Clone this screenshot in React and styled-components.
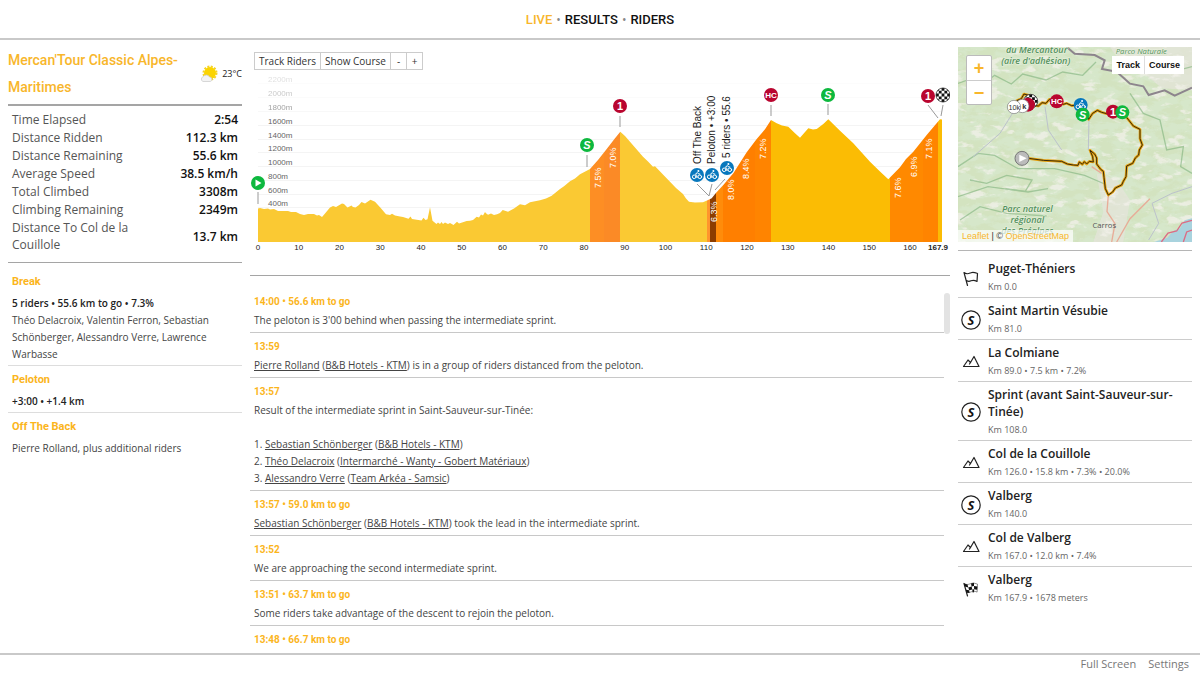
import React, { useState } from "react"
import styled, { createGlobalStyle } from "styled-components"

const GlobalStyle = createGlobalStyle`
    * {
        box-sizing: border-box;
    }
    body {
        margin: 0;
        background: #fff;
        color: #444;
        font: 11px/17px "Open Sans", sans-serif;
    }
    a {
        color: inherit;
    }
    button {
        font: inherit;
        cursor: pointer;
    }
`

const display = `"Roboto", sans-serif`

const Page = styled.div`
    display: flex;
    flex-direction: column;
    height: 100vh;
`
const Nav = styled.nav`
    display: flex;
    justify-content: center;
    align-items: center;
    gap: 4px;
    height: 40px;
    flex: none;
    border-bottom: 2px solid #c9c9c9;
    color: #888;
    font-size: 12px;
`
const NavLink = styled.a`
    font-family: ${display};
    font-size: 13px;
    font-weight: 500;
    text-decoration: none;
    text-transform: uppercase;
    color: ${props => props.$active ? "#f8b62b" : "#111"};
`
const Columns = styled.main`
    display: grid;
    grid-template-columns: 250px minmax(0, 1fr) 250px;
    flex: 1;
    min-height: 0;
`
const Side = styled.aside`
    padding: 7px 8px 0;
    overflow: hidden;
`
const TitleRow = styled.header`
    display: flex;
    justify-content: space-between;
    align-items: center;
    height: 59px;
    padding-bottom: 4px;
    border-bottom: 2px solid #a5a5a5;
`
const Title = styled.h1`
    margin: 0;
    max-width: 180px;
    font: 500 14px/27px ${display};
    color: #f8b62b;
`
const Weather = styled.div`
    display: flex;
    align-items: center;
    gap: 4px;
    font-size: 9px;
    color: #222;
`
const Stats = styled.table`
    width: 100%;
    margin: 4px 0 9px;
    padding: 0 4px;
    border-spacing: 0;
    font-size: 12px;
    line-height: 17px;

    th, td {
        padding: 1px 0 0;
    }
    th {
        max-width: 120px;
        text-align: left;
        font-weight: normal;
        color: #555;
    }
    td {
        text-align: right;
        font-weight: 600;
        color: #111;
    }
`
const Groups = styled.div`
    border-top: 1px solid #a5a5a5;
    padding-top: 5px;
`
const Group = styled.section`
    padding: 4px 4px 2px;
    border-bottom: 1px solid #ddd;
    font-size: 10px;

    &:last-child {
        border: none;
    }
    p {
        margin: 0;
    }
`
const GroupTitle = styled.h2`
    margin: 0 0 3px;
    font: bold 11px/20px ${display};
    color: #fbb51c;
`
const GroupGap = styled.p`
    font-weight: 600;
    color: #222;
`
const Center = styled.section`
    display: flex;
    flex-direction: column;
    min-height: 0;
    padding: 12px 0 8px;
`
const Toolbar = styled.div`
    display: flex;
    margin-left: 4px;
`
const ToolButton = styled.button`
    min-width: 17px;
    height: 18px;
    padding: 0 4px;
    margin-right: -1px;
    border: 1px solid #ccc;
    background: #fff;
    color: #333;
    font-size: 10px;
    line-height: 16px;
`
const Profile = styled.svg`
    display: block;
    width: 100%;
    flex: none;
    margin-bottom: 15px;
    font-family: "Liberation Sans", sans-serif;
`
const FeedFrame = styled.div`
    display: flex;
    flex: 1;
    min-height: 0;
    border-top: 1px solid #a5a5a5;
    padding-top: 12px;
`
const Feed = styled.div`
    flex: 1;
    overflow-y: auto;
    scrollbar-width: none;
`
const ScrollThumb = styled.div`
    width: 6px;
    height: 41px;
    margin-top: 5px;
    border-radius: 3px;
    background: #e3e3e3;
`
const Entry = styled.article`
    padding: 4px 4px 3px;
    border-bottom: 1px solid #c8c8c8;
    font-size: 10px;

    h3 {
        margin: 0 0 1px;
        font: bold 10px/19px ${display};
        color: #fbb51c;
    }
    p {
        margin: 0;
    }
`
const MapBox = styled.div`
    position: relative;
    border-bottom: 1px solid #b5b5b5;
    padding-bottom: 8px;
    font-family: "Liberation Sans", sans-serif;
`
const MapArt = styled.svg`
    display: block;
    width: 100%;
`
const ZoomControl = styled.div`
    position: absolute;
    top: 8px;
    left: 8px;
    display: flex;
    flex-direction: column;
    border: 1px solid #bbb;
    border-radius: 2px;
    background: #fff;

    button {
        width: 24px;
        height: 24px;
        padding: 0;
        border: none;
        background: none;
        color: #f8b62b;
        font: bold 18px/22px "Liberation Sans", sans-serif;
    }
    button + button {
        border-top: 1px solid #ccc;
    }
`
const MapTabs = styled.div`
    position: absolute;
    top: 9px;
    right: 8px;
    display: flex;

    button {
        height: 18px;
        padding: 0 4px;
        border: none;
        background: #fff;
        color: #111;
        font: bold 9px/18px "Liberation Sans", sans-serif;
    }
    button + button {
        border-left: 1px solid #ddd;
    }
`
const Credit = styled.div`
    position: absolute;
    left: 0;
    bottom: 8px;
    padding: 0 4px;
    background: rgba(255, 255, 255, 0.7);
    font-size: 9px;
    line-height: 12px;
    color: #333;

    a {
        color: #f8b62b;
        text-decoration: none;
    }
`
const Waypoints = styled.ul`
    margin: 0;
    padding: 5px 0 0;
    list-style: none;
`
const Waypoint = styled.li`
    display: flex;
    align-items: center;
    gap: 7px;
    padding: 4px 4px 2px 3px;
    border-bottom: 1px solid #ccc;

    &:last-child {
        border: none;
    }
    svg {
        flex: none;
    }
    h4 {
        margin: 0 0 1px;
        font-size: 12px;
        font-weight: 600;
        color: #222;
    }
    p {
        margin: 0;
        font-size: 9px;
        color: #666;
    }
`
const Footer = styled.footer`
    display: flex;
    justify-content: flex-end;
    align-items: flex-start;
    gap: 12px;
    flex: none;
    height: 22px;
    padding-right: 11px;
    border-top: 2px solid #c9c9c9;

    button {
        padding: 0;
        border: none;
        background: none;
        color: #777;
        font-size: 11px;
        line-height: 18px;
    }
`

const stats = [
    ["Time Elapsed", "2:54"],
    ["Distance Ridden", "112.3 km"],
    ["Distance Remaining", "55.6 km"],
    ["Average Speed", "38.5 km/h"],
    ["Total Climbed", "3308m"],
    ["Climbing Remaining", "2349m"],
    ["Distance To Col de la Couillole", "13.7 km"],
]

const groups = [
    { name: "Break", gap: "5 riders • 55.6 km to go • 7.3%", riders: "Théo Delacroix, Valentin Ferron, Sebastian Schönberger, Alessandro Verre, Lawrence Warbasse" },
    { name: "Peloton", gap: "+3:00 • +1.4 km" },
    { name: "Off The Back", riders: "Pierre Rolland, plus additional riders" },
]

const Rider = ({ name, team }) => (
    <><a href="#rider">{name}</a> (<a href="#team">{team}</a>)</>
)

const entries = [
    { time: "14:00 • 56.6 km to go", body: "The peloton is 3'00 behind when passing the intermediate sprint." },
    { time: "13:59", body: <><Rider name="Pierre Rolland" team="B&B Hotels - KTM" /> is in a group of riders distanced from the peloton.</> },
    {
        time: "13:57",
        body: <>
            Result of the intermediate sprint in Saint-Sauveur-sur-Tinée:<br /><br />
            1. <Rider name="Sebastian Schönberger" team="B&B Hotels - KTM" /><br />
            2. <Rider name="Théo Delacroix" team="Intermarché - Wanty - Gobert Matériaux" /><br />
            3. <Rider name="Alessandro Verre" team="Team Arkéa - Samsic" />
        </>
    },
    { time: "13:57 • 59.0 km to go", body: <><Rider name="Sebastian Schönberger" team="B&B Hotels - KTM" /> took the lead in the intermediate sprint.</> },
    { time: "13:52", body: "We are approaching the second intermediate sprint." },
    { time: "13:51 • 63.7 km to go", body: "Some riders take advantage of the descent to rejoin the peloton." },
    { time: "13:48 • 66.7 km to go" },
]

const waypoints = [
    { icon: "flag", name: "Puget-Théniers", info: "Km 0.0" },
    { icon: "sprint", name: "Saint Martin Vésubie", info: "Km 81.0" },
    { icon: "climb", name: "La Colmiane", info: "Km 89.0 • 7.5 km • 7.2%" },
    { icon: "sprint", name: "Sprint (avant Saint-Sauveur-sur-Tinée)", info: "Km 108.0" },
    { icon: "climb", name: "Col de la Couillole", info: "Km 126.0 • 15.8 km • 7.3% • 20.0%" },
    { icon: "sprint", name: "Valberg", info: "Km 140.0" },
    { icon: "climb", name: "Col de Valberg", info: "Km 167.0 • 12.0 km • 7.4%" },
    { icon: "finish", name: "Valberg", info: "Km 167.9 • 1678 meters" },
]

// x y pairs of the elevation line
const line = `258 208.5 260 208 264 209 268 208.5 270 209.5 274 209 278 211 288 211 291 212 296 212 300 214 304 215 308 214 314 214
    317 215.5 319 215 322 217 325 213.5 330 207.5 333 206 336 207 342 203.5 344 204 347.5 207.5 351.5 205.5 353 207 355.5 207.5 359 205 361.5 202
    365 203.5 370.5 199.7 375 201.7 380.5 207.7 386 214.3 390 215 392 213.7 395 215.5 400 216.5 403 217 408.5 218.7 410.5 216.5 412 219 421.5 220.5
    423.5 217.7 425.5 220 427.5 219.3 430 207.3 432.5 220.7 436.5 224 438 222.5 440 224 441.5 222 443 224 445 222.5 448 224 450 223 453.5 225 457 221.7
    459 223.5 466.7 221 470 220.7 473 220 476.7 216.7 479 217.5 481 214.5 483 215.5 485 212 486 213.3 488 214.7 491 213.5 494 215 497 214.3 500 213
    502.7 210 508 211.7 514 208.5 520 204.3 525 205.3 530 202.3 540 200.3 546 198.5 551.7 195.7 560 189 564 186.3 570 181.3 575 178.5 580 174.3 590 169
    598 160 606.7 149 615 138.3 620.3 131.7 625 136 630 141.7 643 156.7 648 161.5 653 166.7 655 166.3 670 181.7 676 188 683 194 686 198.5 689 201.7
    695 202.5 703 202.3 707 200.5 711.7 198.3 715.7 193.3 723.3 185 733.3 173.3 746.7 152.3 756.7 139 765 129.3 771 120 776.7 123.3 782 125.5 788.3 126.7
    795 133.3 800 137.7 808.3 128.3 813 129.5 816.7 129 823.3 124 828.3 119.3 840 130.7 853.3 143.3 870 161.7 880 171.5 888.3 179.3 900 167.3
    906 159 913.3 151.7 926.7 135 940 119.3 942 119.5`

const segments = [
    [258, 590, "#fac933"],
    [590, 604, "#fd8e24"],
    [604, 620, "#fb8a26"],
    [620, 707, "#fac933"],
    [707, 710, "#ff952d"],
    [710, 716, "#8c3d00"],
    [716, 723, "#ff8c0a"],
    [723, 755, "#ff7f00"],
    [755, 771, "#ff8400"],
    [771, 890, "#fbbc04"],
    [890, 923, "#ff8900"],
    [923, 938, "#ff8400"],
    [938, 942, "#fbbc04"],
]

const levels = [
    [2200, 82, 0.2],
    [2000, 96, 0.35],
    [1800, 110, 0.6],
    [1600, 124, 1],
    [1400, 138, 1],
    [1200, 151, 1],
    [1000, 165, 1],
    [800, 179, 1],
    [600, 193, 1],
    [400, 206, 1],
]

const grades = [
    ["7.5%", 601, 188],
    ["7.0%", 616, 168],
    ["6.3%", 717, 222],
    ["8.0%", 734, 200],
    ["8.4%", 749, 179],
    ["7.2%", 766, 159],
    ["7.6%", 901, 198],
    ["6.9%", 917, 177],
    ["7.1%", 932, 159],
]

const pointers = [
    [258, 192, 258, 204],
    [587, 155, 587, 167],
    [620, 116, 620, 127],
    [771, 105, 771, 116],
    [828, 104, 828, 115],
    [928, 105, 938, 118],
    [943, 105, 941, 116],
    [697, 184, 709, 196],
    [712, 184, 709, 196],
    [725, 179, 715, 190],
]

const badgeColors = { S: "#0db83e", HC: "#b9052f", 1: "#b9052f" }

const Badge = ({ x, y, label }) => (
    <g transform={`translate(${x} ${y})`}>
        <circle r="7" fill={badgeColors[label]} />
        <text
            y={label === "HC" ? 3 : 4}
            textAnchor="middle"
            fill="#fff"
            fontWeight="bold"
            fontStyle={label === "S" ? "italic" : "normal"}
            fontSize={label === "HC" ? 8 : 11}
        >{label}</text>
    </g>
)

const Bike = ({ x, y }) => (
    <g transform={`translate(${x} ${y})`}>
        <circle r="7" fill="#0878bd" />
        <g fill="none" stroke="#fff" strokeWidth="1" strokeLinecap="round" strokeLinejoin="round">
            <circle cx="-2.8" cy="1.8" r="1.8" />
            <circle cx="2.8" cy="1.8" r="1.8" />
            <path d="M0 2.6V.6L-1.6-.8.4-2.4 1.6-1H2.8" />
        </g>
        <circle cx="1.4" cy="-4" r="1" fill="#fff" />
    </g>
)

const Checker = ({ x, y }) => (
    <g transform={`translate(${x} ${y})`}>
        <circle r="7" fill="#fff" />
        <path
            clipPath="url(#disc)"
            fill="#111"
            d="M-7-7h2.8v2.8H-7zM-1.4-7h2.8v2.8h-2.8zM4.2-7H7v2.8H4.2zM-4.2-4.2h2.8v2.8h-2.8zM1.4-4.2h2.8v2.8H1.4zM-7-1.4h2.8v2.8H-7zM-1.4-1.4h2.8v2.8h-2.8zM4.2-1.4H7v2.8H4.2zM-4.2 1.4h2.8v2.8h-2.8zM1.4 1.4h2.8v2.8H1.4zM-7 4.2h2.8V7H-7zM-1.4 4.2h2.8V7h-2.8zM4.2 4.2H7V7H4.2z"
        />
        <circle r="7" fill="none" stroke="#222" strokeWidth=".8" />
    </g>
)

const ProfileChart = () => (
    <Profile viewBox="250 70 700 190" role="img" aria-label="Stage profile">
        <defs>
            <clipPath id="hill"><polygon points={`258 242 ${line} 942 242`} /></clipPath>
            <clipPath id="disc"><circle r="7" /></clipPath>
        </defs>
        {levels.map(([m, y, opacity]) => (
            <g key={m} opacity={opacity}>
                <path d={`M258 ${y + 1.5}H942`} stroke="#f4f4f4" />
                <text x="268" y={y} fontSize="8" fill="#666">{m}m</text>
            </g>
        ))}
        <g clipPath="url(#hill)">
            {segments.map(([from, to, fill]) => (
                <rect key={from} x={from} y="100" width={to - from} height="142" fill={fill} shapeRendering="crispEdges" />
            ))}
        </g>
        {pointers.map(([x1, y1, x2, y2], i) => (
            <line key={i} x1={x1} y1={y1} x2={x2} y2={y2} stroke="#999" />
        ))}
        {grades.map(([label, x, y]) => (
            <text key={label} transform={`translate(${x} ${y}) rotate(-90)`} fontSize="9" fill="#fff">{label}</text>
        ))}
        {[["Off The Back", 701], ["Peloton • +3:00", 715], ["5 riders • 55.6", 730]].map(([label, x], i) => (
            <text key={label} transform={`translate(${x} ${i === 2 ? 158 : 164}) rotate(-90)`} fontSize="10" fill="#222">{label}</text>
        ))}
        {Array.from({ length: 17 }, (_, i) => (
            <text key={i} x={258 + i * 40.75} y="250" textAnchor="middle" fontSize="8" fill="#222">{i * 10}</text>
        ))}
        <text x="938" y="250" textAnchor="middle" fontSize="8" fontWeight="bold" fill="#222">167.9</text>
        <circle cx="258" cy="183" r="7" fill="#0db83e" />
        <path d="M255.5 179.5l6 3.5-6 3.5z" fill="#fff" />
        <Badge x="587" y="145" label="S" />
        <Badge x="620" y="106" label="1" />
        <Badge x="771" y="95" label="HC" />
        <Badge x="828" y="95" label="S" />
        <Badge x="928" y="96" label="1" />
        <Checker x="943" y="95" />
        <Bike x="697" y="175" />
        <Bike x="712" y="175" />
        <Bike x="727" y="168" />
    </Profile>
)

const route = `M235 355 280 361 335 364 352 372 370 375 384 376 388 366 397 373 403 365 410 372 418 364 430 366 428 350 420 331 434 342
    440 354 440 372 452 388 460 394 462 412 466 446 475 465 488 456 496 444 515 435 520 424 528 410 530 378 548 370 556 354 566 345 568 330
    577 315 570 296 570 268 550 258 536 240 517 217 489 215 470 221 455 217 442 211 428 220 416 238 413 224 398 224 392 195 365 197 350 190
    340 193 320 184 298 178 288 190 276 188 265 198 250 196 242 184 236 166 222 162 214 176 200 182 192 200`

const RaceMap = () => {
    const [mode, setMode] = useState("course")
    return (
        <MapBox>
            <MapArt viewBox="24 21 702 585" role="img" aria-label="Route map">
                <defs>
                    <filter id="forest" x="0" y="0" width="100%" height="100%">
                        <feTurbulence type="fractalNoise" baseFrequency="0.02 0.04" numOctaves="5" seed="8" />
                        <feColorMatrix values="0 0 0 0 .68  0 0 0 0 .81  0 0 0 0 .61  6 0 0 0 -2.4" />
                    </filter>
                    <filter id="rock" x="0" y="0" width="100%" height="100%">
                        <feTurbulence type="fractalNoise" baseFrequency="0.02 0.04" numOctaves="4" seed="21" />
                        <feColorMatrix values="0 0 0 0 .91  0 0 0 0 .89  0 0 0 0 .85  7 0 0 0 -4" />
                    </filter>
                </defs>
                <rect x="24" y="21" width="702" height="585" fill="#d3e3c0" />
                <rect x="24" y="21" width="702" height="585" filter="url(#forest)" opacity=".8" />
                <path d="M480 21h246v130l-90-6-60-50-60-20zM440 400l60 20 40 60-20 126h-90l30-90z" fill="#e6e4dc" opacity=".7" />
                <rect x="24" y="21" width="702" height="585" filter="url(#rock)" opacity=".7" />
                <path d="M726 535l-22 6-14 24-20 8-18 20-40 13h114z" fill="#a9d3de" />
                <g fill="none" stroke="#7fb27c" strokeWidth="4" opacity=".6">
                    <path d="M24 130l40-14 30 20 40-30 50 26 34-30 70 18 50-24 60 10 40-40M24 380l60-40 50 6 70 40 110 0 90 20 60 26M540 160l40 60 50 20 20 90 50-10-8 60 34 20M60 420l50 10 60-24 76 14-20 34-60-8M560 60l66 0 46 34 54-14" />
                    <path d="M24 470l90-30 120 16 60-10M30 540l60-40 80 20 120 8" />
                </g>
                <path d="M350 21l24 20 60 4 30 16-8 26 44 8 40 36 40 8 16 26 48-14 30 16 52-24" fill="none" stroke="#8d858d" strokeWidth="6" />
                <g fill="none" stroke="#bcc2cc" strokeWidth="3">
                    <path d="M415 330l2-96M285 200l10 70 40 60M200 200l-50 80-80 70M726 440l-60 20-60 30 20 60-30 50" />
                </g>
                <path d="M475 465l-4 50 24 36-10 55M455 400l-30-20M500 606l40-70 60-60" fill="none" stroke="#e8ac98" strokeWidth="4" />
                <path d="M726 541l-30 8-16 24-26 6-20 27M700 606l10-30 16-6" fill="none" stroke="#dc6b84" strokeWidth="4" />
                <g fontFamily="Open Sans, sans-serif" fontStyle="italic" fontSize="27" fontWeight="600" fill="#53905c" textAnchor="middle" stroke="#e8f1de" strokeWidth="3" paintOrder="stroke">
                    <text x="260" y="38">du Mercantour</text>
                    <text x="257" y="71">(aire d'adhésion)</text>
                    <text x="574" y="42" fontSize="23" fontWeight="normal">Parco Naturale</text>
                    <text x="232" y="516">Parc naturel</text>
                    <text x="232" y="549">régional</text>
                    <text x="232" y="582">des Préalpes</text>
                </g>
                <text x="463" y="563" fontFamily="Open Sans, sans-serif" fontSize="23" fill="#555" textAnchor="middle">Carros</text>
                <path d={route} fill="none" stroke="#e5a00d" strokeWidth="8" strokeLinejoin="round" />
                <path d={route} fill="none" stroke="#382a0a" strokeWidth="3" strokeLinejoin="round" />
                <g transform="translate(242 184) scale(3)"><Checker x="0" y="0" /></g>
                <circle cx="234" cy="194" r="21" fill="#b9052f" />
                <g fontSize="22" textAnchor="middle" fill="#333">
                    <circle cx="217" cy="198" r="20" fill="#fff" stroke="#777" strokeWidth="2" />
                    <text x="223" y="206" fontWeight="bold">k</text>
                    <circle cx="192" cy="201" r="20" fill="#fff" stroke="#777" strokeWidth="2" />
                    <text x="193" y="209">10k</text>
                </g>
                <g transform="translate(320 184) scale(3)"><Badge x="0" y="0" label="HC" /></g>
                <g transform="translate(392 195) scale(3)"><Bike x="0" y="0" /></g>
                <g transform="translate(398 224) scale(3)"><Badge x="0" y="0" label="S" /></g>
                <g transform="translate(489 215) scale(3)"><Badge x="0" y="0" label="1" /></g>
                <g transform="translate(517 217) scale(3)"><Badge x="0" y="0" label="S" /></g>
                <circle cx="216" cy="355" r="21" fill="#bbb" stroke="#777" strokeWidth="3" />
                <path d="M208 344l22 11-22 11z" fill="#fff" />
            </MapArt>
            <ZoomControl>
                <button aria-label="Zoom in">+</button>
                <button aria-label="Zoom out">−</button>
            </ZoomControl>
            <MapTabs>
                <button aria-pressed={mode === "track"} onClick={() => setMode("track")}>Track</button>
                <button aria-pressed={mode === "course"} onClick={() => setMode("course")}>Course</button>
            </MapTabs>
            <Credit>
                <a href="#leaflet">Leaflet</a> | © <a href="#osm">OpenStreetMap</a>
            </Credit>
        </MapBox>
    )
}

const WaypointIcon = ({ type }) => (
    <svg width="20" height="20" viewBox="0 0 20 20" fill="none" stroke="#222" strokeWidth="1.2" strokeLinejoin="round" strokeLinecap="round" aria-hidden="true">
        {type === "flag" && <path d="M6.5 17.5L3 4.5c3 2.5 5 1 7 .2 2.5-1 4.5 0 6.5.8l-.5 8c-2.5-1.5-4-1.5-6-.7-1.5.7-3 .7-4.500-.3" />}
        {type === "sprint" && <>
            <circle cx="10" cy="10" r="9.2" />
            <text x="10" y="14.5" textAnchor="middle" fontFamily="Open Sans, sans-serif" fontSize="13" fontWeight="bold" fontStyle="italic" fill="#111" stroke="none">S</text>
        </>}
        {type === "climb" && <path d="M2.5 14.5l4.5-6.5 2.5 2.5 3.5-6 5 10zM9.500 10.500L8.500 12" />}
        {type === "finish" && <>
            <path d="M6.500 17L3 4.500" />
            <path stroke="none" fill="#111" d="M3 4.500l3.500 1 .8 3-3.500-1zM10 4.500l3-.7v3.100l-2.400.6zM7.300 8.500l3.300-1 .7 3-3.200.8zM13 6.900l3.400.6-.3 3.200-3-.5zM4.800 10.700l3.300.6.5 2.700-3-.3zM11.300 10.500l1.800-.3v3l-1.500.3z" />
            <path d="M3 4.500c3 2 5 .6 7 0 2.500-.8 4.500 0 6.500.6l-.4 8c-2-1-4-1-5.500-.4-1.600.8-3.500.8-5 .2" strokeWidth=".5" />
        </>}
    </svg>
)

export default function App() {
    return (
        <Page>
            <GlobalStyle />
            <Nav>
                <NavLink href="#live" $active>Live</NavLink>•
                <NavLink href="#results">Results</NavLink>•
                <NavLink href="#riders">Riders</NavLink>
            </Nav>
            <Columns>
                <Side>
                    <TitleRow>
                        <Title>Mercan'Tour Classic Alpes-Maritimes</Title>
                        <Weather>
                            <svg width="18" height="18" viewBox="0 0 18 18" aria-hidden="true">
                                <circle cx="10" cy="8" r="6.5" fill="none" stroke="#f4d324" strokeWidth="2" strokeDasharray="2 1.4" />
                                <circle cx="10" cy="8" r="6" fill="#fbd400" />
                                <path d="M3 16.500a2.500 2.500 0 0 1 .3-4.800 3.500 3.500 0 0 1 6.200.3 2.300 2.300 0 0 1 .8 4.500z" fill="#f3f3f3" stroke="#c9c9c9" strokeWidth=".7" />
                            </svg>
                            23°C
                        </Weather>
                    </TitleRow>
                    <Stats>
                        <tbody>
                            {stats.map(([label, value]) => (
                                <tr key={label}>
                                    <th scope="row">{label}</th>
                                    <td>{value}</td>
                                </tr>
                            ))}
                        </tbody>
                    </Stats>
                    <Groups>
                        {groups.map(group => (
                            <Group key={group.name}>
                                <GroupTitle>{group.name}</GroupTitle>
                                {group.gap && <GroupGap>{group.gap}</GroupGap>}
                                {group.riders && <p>{group.riders}</p>}
                            </Group>
                        ))}
                    </Groups>
                </Side>
                <Center>
                    <Toolbar>
                        <ToolButton>Track Riders</ToolButton>
                        <ToolButton>Show Course</ToolButton>
                        <ToolButton>-</ToolButton>
                        <ToolButton>+</ToolButton>
                    </Toolbar>
                    <ProfileChart />
                    <FeedFrame>
                        <Feed>
                            {entries.map((entry, i) => (
                                <Entry key={i}>
                                    <h3>{entry.time}</h3>
                                    {entry.body && <p>{entry.body}</p>}
                                </Entry>
                            ))}
                        </Feed>
                        <ScrollThumb />
                    </FeedFrame>
                </Center>
                <Side>
                    <RaceMap />
                    <Waypoints>
                        {waypoints.map(point => (
                            <Waypoint key={point.info}>
                                <WaypointIcon type={point.icon} />
                                <div>
                                    <h4>{point.name}</h4>
                                    <p>{point.info}</p>
                                </div>
                            </Waypoint>
                        ))}
                    </Waypoints>
                </Side>
            </Columns>
            <Footer>
                <button>Full Screen</button>
                <button>Settings</button>
            </Footer>
        </Page>
    )
}
